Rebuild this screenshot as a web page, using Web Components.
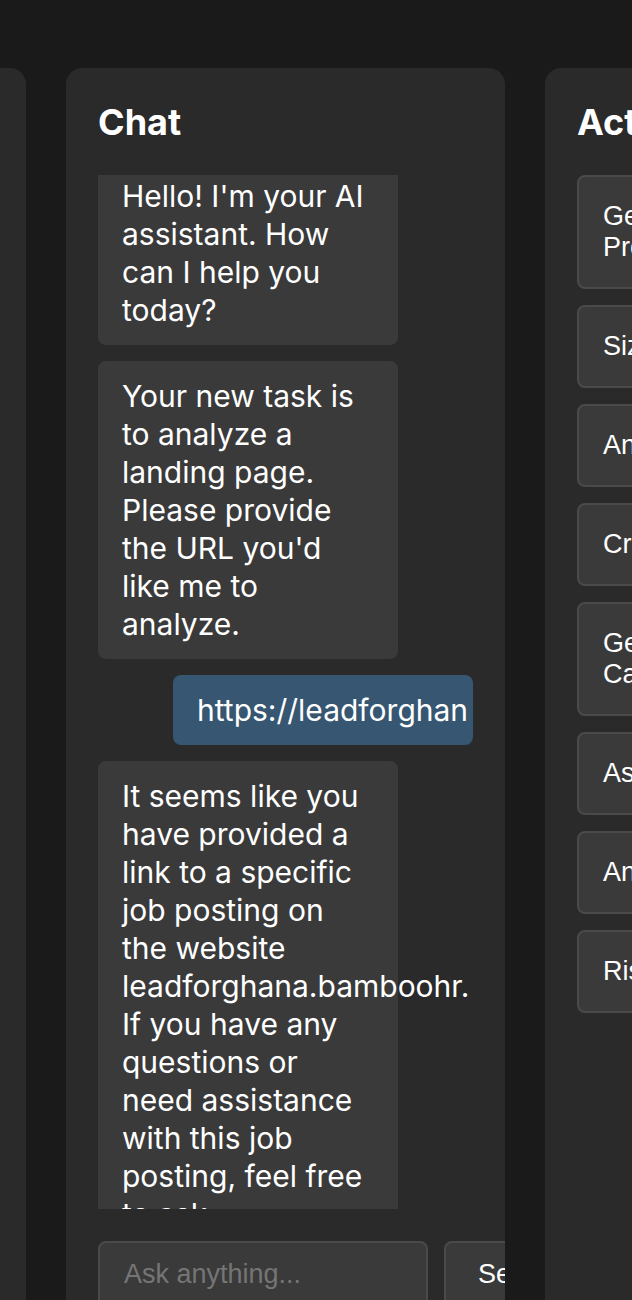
<!DOCTYPE html>
<html lang="en">
<head>
<meta charset="utf-8">
<meta name="viewport" content="width=device-width, initial-scale=1">
<title>Assistant workspace</title>
<style>
  html { --page: #1a1a1a; --panel: #2a2a2a; --surface: #3a3a3a; --line: #4a4a4a; --user: #365672; }
  body { margin: 0; background: var(--page); color: #fff; font-family: Inter, "Noto Sans", sans-serif; }
</style>
</head>
<body>
<work-space>
  <side-panel slot="before"></side-panel>
  <side-panel heading="Chat">
    <chat-log>
      <chat-message>Hello! I'm your AI assistant. How can I help you today?</chat-message>
      <chat-message>Your new task is to analyze a landing page. Please provide the URL you'd like me to analyze.</chat-message>
      <chat-message from="user">https://leadforghan</chat-message>
      <chat-message>It seems like you have provided a link to a specific job posting on the website leadforghana.bamboohr. If you have any questions or need assistance with this job posting, feel free to ask.</chat-message>
    </chat-log>
    <chat-form></chat-form>
  </side-panel>
  <side-panel slot="after" heading="Actions">
    <action-button>Generate Comprehensive Product Roadmap</action-button>
    <action-button>Size the Market</action-button>
    <action-button>Analyze Competitors</action-button>
    <action-button>Create User Personas</action-button>
    <action-button>Generate Marketing Campaigns and Ideas</action-button>
    <action-button>Assess Feasibility</action-button>
    <action-button>Analyze Landing Page</action-button>
    <action-button>Risk Assessment</action-button>
  </side-panel>
</work-space>
<script>
  class ShadowElement extends HTMLElement {
    constructor() {
      super();
      this.attachShadow({ mode: "open" }).innerHTML = this.constructor.markup;
    }
  }

  /* Board of three panels; the outer two run off the window's edges. */
  customElements.define("work-space", class extends ShadowElement {
    static markup = `
      <style>
        :host { display: block; box-sizing: border-box; height: 100vh; padding-top: 68px; overflow: hidden; }
        main { display: grid; grid-template-columns: 26px minmax(0, 1fr) 87px; grid-template-rows: minmax(0, 1fr);
               gap: 40px; height: calc(100vh - 29px); }
        .cell { display: flex; min-width: 0; overflow: hidden; }
        .before { justify-content: flex-end; }
        .before ::slotted(*), .after ::slotted(*) { flex: 0 0 439px; }
        .middle ::slotted(*) { flex: 1; }
      </style>
      <main>
        <div class="cell before"><slot name="before"></slot></div>
        <div class="cell middle"><slot></slot></div>
        <div class="cell after"><slot name="after"></slot></div>
      </main>`;
  });

  customElements.define("side-panel", class extends ShadowElement {
    static markup = `
      <style>
        :host { display: block; box-sizing: border-box; min-width: 0; padding: 32px; overflow: hidden;
                border-radius: 16px; background: var(--panel); }
        section { display: flex; flex-direction: column; height: 100%; }
        h2 { margin: 0 0 30px; font-size: 36px; line-height: 45px; font-weight: 700; }
        .content { display: flex; flex-direction: column; gap: 16px; flex: 1; min-height: 0; }
      </style>
      <section><h2></h2><div class="content"><slot></slot></div></section>`;
    connectedCallback() {
      this.shadowRoot.querySelector("h2").textContent = this.getAttribute("heading") || "";
    }
  });

  customElements.define("chat-message", class extends ShadowElement {
    static markup = `
      <style>
        :host { display: block; box-sizing: border-box; flex: none; width: 80%; padding: 16px 24px;
                border-radius: 8px; background: var(--surface); font-size: 30px; line-height: 38px; }
        :host([from="user"]) { align-self: flex-end; background: var(--user); }
      </style>
      <slot></slot>`;
  });

  customElements.define("chat-log", class extends ShadowElement {
    static markup = `
      <style>
        :host { display: flex; flex-direction: column; gap: 16px; flex: 1; min-height: 0; margin-bottom: 16px;
                overflow: hidden auto; scrollbar-width: none; }
      </style>
      <slot></slot>`;
  });

  customElements.define("chat-form", class extends ShadowElement {
    static markup = `
      <style>
        :host { display: block; flex: none; }
        form { display: flex; gap: 16px; }
        input, button { box-sizing: border-box; flex: none; height: 66px; margin: 0; border: 2px solid var(--line);
          border-radius: 8px; background: var(--surface); color: #fff; font: 27px/31px "Liberation Sans", sans-serif; }
        input { width: 88%; padding: 0 24px; }
        input::placeholder { color: #757575; }
        button { padding: 0 32px; }
      </style>
      <form onsubmit="return false">
        <input type="text" placeholder="Ask anything..." aria-label="Message">
        <button type="submit">Send</button>
      </form>`;
  });

  customElements.define("action-button", class extends ShadowElement {
    static markup = `
      <style>
        :host { display: block; flex: none; }
        button { display: block; box-sizing: border-box; width: 100%; margin: 0; padding: 24px; text-align: left;
          border: 2px solid var(--line); border-radius: 8px; background: var(--surface); color: #fff;
          font: 27px/31px "Liberation Sans", sans-serif; }
      </style>
      <button type="button"><slot></slot></button>`;
  });

  /* The conversation opens slightly scrolled down. */
  document.querySelector("chat-log").scrollTop = 14;
</script>
</body>
</html>
